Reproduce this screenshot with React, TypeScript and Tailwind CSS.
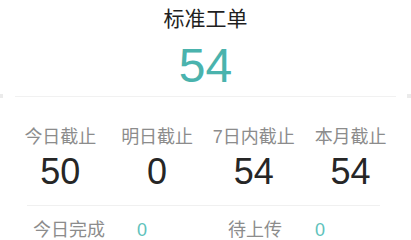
import React from "react";

const cols = [
  { label: "今日截止", value: "50" },
  { label: "明日截止", value: "0" },
  { label: "7日内截止", value: "54" },
  { label: "本月截止", value: "54" },
];

export default function App() {
  return (
    <div className="relative w-[411px] h-[240px] overflow-hidden bg-white font-['Liberation_Sans','Noto_Sans_CJK_SC',sans-serif]">
      <div className="absolute left-0 top-[94px] w-[3px] h-[4px] bg-[#ebebeb]" />
      <div className="absolute right-0 top-[94px] w-[4px] h-[4px] bg-[#ebebeb]" />
      <div className="flex flex-col items-center">
        <div className="mt-[5px] text-[21px] leading-[28px] text-[#1f1f1f]">标准工单</div>
        <div className="mt-[9px] text-[48px] leading-[48px] text-[#4ab3ad]">54</div>
      </div>
      <div className="mx-[15px] mt-[6px] h-px bg-[#f1f1f1]" />
      <div className="grid grid-cols-4 px-3 mt-[28px]">
        {cols.map((c) => (
          <div key={c.label} className="flex flex-col items-center">
            <div className="text-[18px] leading-[24px] text-[#8c8c8c] whitespace-nowrap">{c.label}</div>
            <div className="mt-[5px] text-[36px] leading-[36px] text-[#262626]">{c.value}</div>
          </div>
        ))}
      </div>
      <div className="ml-[27px] mr-[31px] mt-[15px] h-px bg-[#f0f0f0]" />
      <div className="flex px-3 mt-[12px]">
        <div className="flex-1 flex items-center pl-[21px]">
          <span className="text-[18px] leading-[24px] text-[#8c8c8c]">今日完成</span>
          <span className="ml-[32px] text-[18px] leading-[24px] text-[#5ec2bb]">0</span>
        </div>
        <div className="flex-1 flex items-center pl-[24px]">
          <span className="text-[18px] leading-[24px] text-[#8c8c8c]">待上传</span>
          <span className="ml-[33px] text-[18px] leading-[24px] text-[#5ec2bb]">0</span>
        </div>
      </div>
    </div>
  );
}
